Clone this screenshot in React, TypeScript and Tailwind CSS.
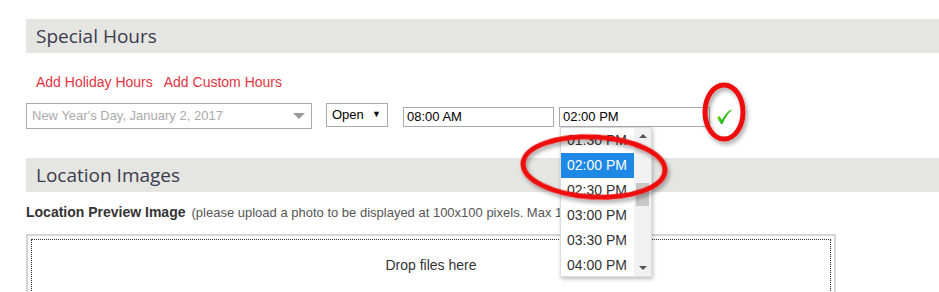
import React from 'react';

const times = ['01:30 PM', '02:00 PM', '02:30 PM', '03:00 PM', '03:30 PM', '04:00 PM'];

function SectionHeader({ title }: { title: string }) {
  return (
    <div className="h-[34px] bg-[#e5e5e1] pl-[10px] flex items-center">
      <h2 className="text-[19px] text-[#3b3b4f] font-['Open_Sans',sans-serif] leading-none">{title}</h2>
    </div>
  );
}

export default function App() {
  return (
    <div className="relative w-[939px] h-[292px] overflow-hidden bg-white font-['Liberation_Sans',Arial,sans-serif] text-[#333]">
      <div className="pl-[26px] pt-[19px]">
        <SectionHeader title="Special Hours" />

        {/* links */}
        <div className="flex gap-[11px] pl-[10px] mt-[21px] text-[14px] text-[#e2343f] leading-[16px]">
          <a href="#">Add Holiday Hours</a>
          <a href="#">Add Custom Hours</a>
        </div>

        {/* hours row */}
        <div className="flex items-start mt-[13px] h-[26px]">
          <div className="w-[286px] h-[26px] border border-[#aaa] flex items-center justify-between pl-[5px] pr-[6px]">
            <span className="text-[13px] text-[#aaa]">New Year's Day, January 2, 2017</span>
            <span className="w-0 h-0 border-l-[6px] border-r-[6px] border-t-[6px] border-l-transparent border-r-transparent border-t-[#999]" />
          </div>
          <div className="ml-[14px] w-[62px] h-[24px] border border-[#aaa] flex items-center justify-between pl-[5px] pr-[6px]">
            <span className="text-[13px] text-black">Open</span>
            <span className="text-[9px] text-black">▼</span>
          </div>
          <div className="ml-[15px] mt-[4px] w-[151px] h-[20px] border border-[#aaa] flex items-center px-[3px] text-[13px] text-black">
            08:00 AM
          </div>
          <div className="ml-[5px] mt-[4px] w-[151px] h-[20px] border border-[#aaa] flex items-center px-[3px] text-[13px] text-black">
            02:00 PM
          </div>
          <svg className="ml-[5px] mt-[5px]" width="18" height="18" viewBox="0 0 18 18">
            <defs>
              <linearGradient id="chk" x1="0" y1="0" x2="1" y2="1">
                <stop offset="0" stopColor="#e4e000" />
                <stop offset="0.5" stopColor="#2fc21a" />
                <stop offset="1" stopColor="#0a9a20" />
              </linearGradient>
            </defs>
            <path d="M2 9.5 L4.5 8 L7 12 C9 7.5 12 4 16 1.5 L16.5 2.5 C13 5.5 10 10 7.5 16 L6 16 Z" fill="url(#chk)" />
          </svg>
        </div>

        <div className="mt-[29px]">
          <SectionHeader title="Location Images" />
        </div>

        <p className="mt-[12px] leading-[16px] whitespace-nowrap">
          <span className="text-[14px] font-bold text-[#333]">Location Preview Image</span>
          <span className="text-[13px] text-[#555] ml-[6px]">(please upload a photo to be displayed at 100x100 pixels. Max 1MB)</span>
        </p>

        {/* drop zone */}
        <div className="mt-[13px] w-[810px] h-[70px] border-2 border-[#d6d6d6] p-[3px]">
          <div className="h-full border border-dotted border-[#333] flex justify-center pt-[15px]">
            <span className="text-[14px] text-[#333]">Drop files here</span>
          </div>
        </div>
      </div>

      {/* open time dropdown */}
      <div className="absolute left-[560px] top-[127px] w-[92px] h-[150px] bg-white border border-[#ddd] shadow-[1px_2px_4px_rgba(0,0,0,0.25)] flex overflow-hidden">
        <ul className="flex-1">
          {times.map((t) => (
            <li
              key={t}
              className={
                t === '02:00 PM'
                  ? 'h-[25px] flex items-center pl-[6px] text-[14px] bg-[#1e88e5] text-white'
                  : 'h-[25px] flex items-center pl-[6px] text-[14px] text-[#333]'
              }
            >
              {t}
            </li>
          ))}
        </ul>
        <div className="w-[17px] bg-[#f1f1f1] flex flex-col items-center">
          <span className="mt-[6px] w-0 h-0 border-l-[4px] border-r-[4px] border-b-[4px] border-l-transparent border-r-transparent border-b-[#555]" />
          <span className="mt-[45px] w-[13px] h-[23px] bg-[#c8c8c8]" />
          <span className="mt-auto mb-[6px] w-0 h-0 border-l-[4px] border-r-[4px] border-t-[4px] border-l-transparent border-r-transparent border-t-[#555]" />
        </div>
      </div>

      {/* annotation circles */}
      <svg className="absolute left-0 top-0 pointer-events-none" width="939" height="292">
        <defs>
          <filter id="sh" x="-20%" y="-20%" width="140%" height="140%">
            <feDropShadow dx="2" dy="3" stdDeviation="2" floodColor="#000" floodOpacity="0.35" />
          </filter>
        </defs>
        <ellipse cx="594" cy="167" rx="71" ry="30" transform="rotate(3 594 167)" fill="none" stroke="#ee0a0a" strokeWidth="5" filter="url(#sh)" />
        <ellipse cx="724" cy="112" rx="19" ry="27" fill="none" stroke="#ee0a0a" strokeWidth="5" filter="url(#sh)" />
      </svg>
    </div>
  );
}
